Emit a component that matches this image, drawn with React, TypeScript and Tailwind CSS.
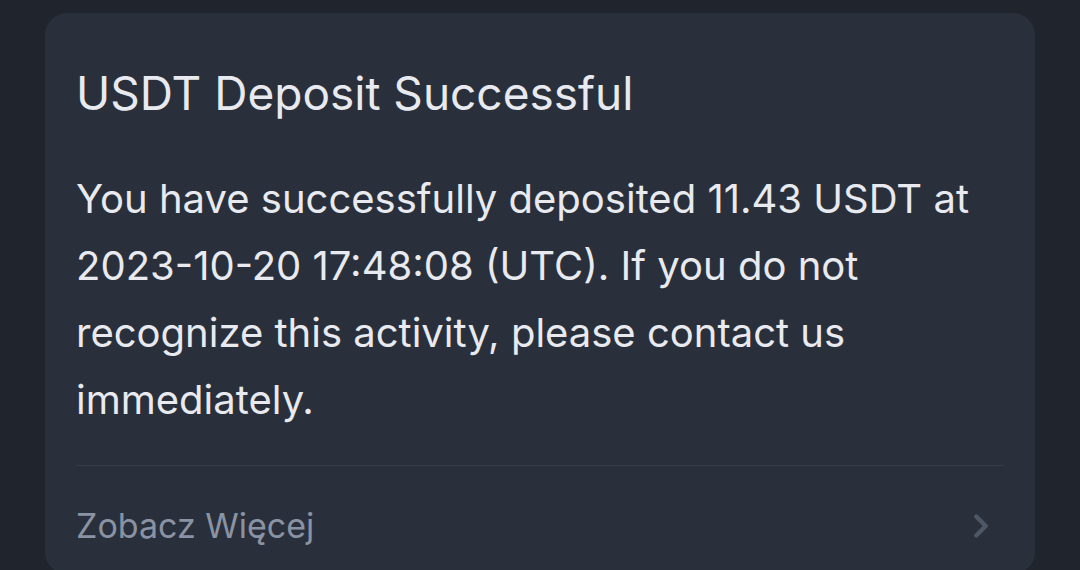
import { ChevronRight } from "lucide-react";

const App = () => {
  return (
    <div className="h-[570px] w-[1080px] overflow-hidden bg-[#1f242d] px-[45px] pt-[13px] font-['Inter',sans-serif]">
      <div className="rounded-[22px] bg-[#29303b] px-[31px] pt-[50px] pb-6">
        <h1 className="text-[46px] font-normal leading-[60px] text-[#e8eaef]">USDT Deposit Successful</h1>
        <p className="mt-[42px] text-[40px] leading-[67px] text-[#e8eaef]">
          You have successfully deposited 11.43 USDT at 2023-10-20 17:48:08 (UTC). If you do not recognize this activity, please contact us immediately.
        </p>
        <div className="mt-[32px] h-px bg-[#353c48]" />
        <div className="flex items-center justify-between pt-[36px]">
          <span className="text-[34px] leading-[48px] text-[#8a93a3]">Zobacz Więcej</span>
          <ChevronRight className="mr-[4px] h-[38px] w-[38px] text-[#4e5766]" strokeWidth={2.8} />
        </div>
      </div>
    </div>
  );
};

export default App;
